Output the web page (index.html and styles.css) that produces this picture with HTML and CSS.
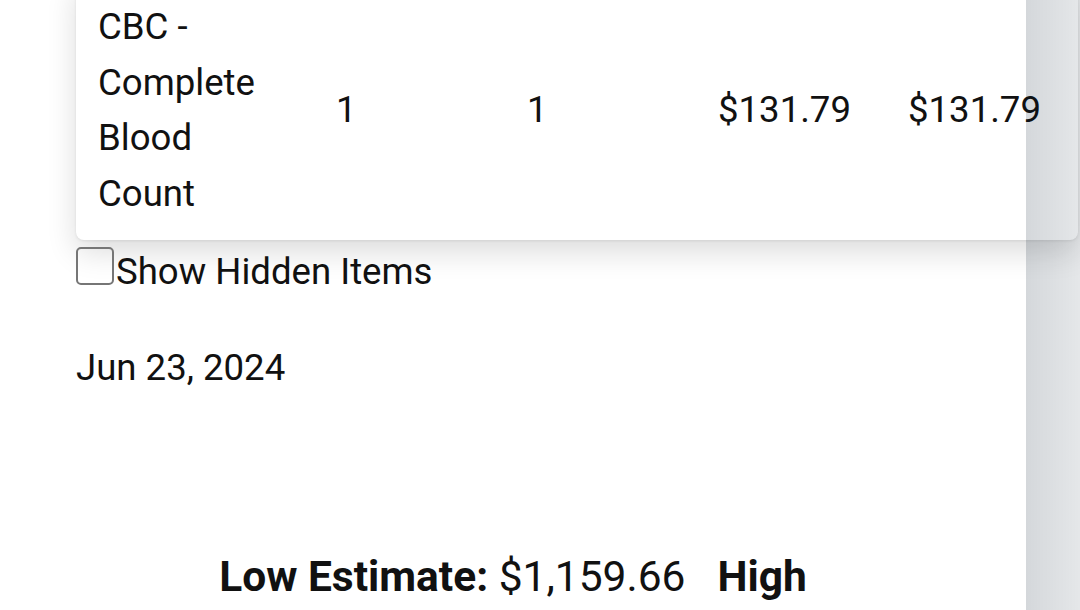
FILE: index.html
```html
<!DOCTYPE html>
<html lang="en">
<head>
    <meta charset="UTF-8">
    <meta name="viewport" content="width=device-width, initial-scale=1.0">
    <title>Estimate</title>
    <link rel="stylesheet" href="styles.css">
</head>
<body>

<div class="page">
    <div class="card">
        <div class="row">
            <div class="cell item">CBC - Complete Blood Count</div>
            <div class="cell">1</div>
            <div class="cell">1</div>
            <div class="cell">$131.79</div>
            <div class="cell">$131.79</div>
        </div>
    </div>

    <label class="toggle"><span class="box"></span>Show Hidden Items</label>

    <div class="date">Jun 23, 2024</div>

    <div class="estimate">
        <b>Low Estimate:</b> $1,159.66<b class="high">High</b>
    </div>
</div>

<div class="edge"></div>

</body>
</html>
```

FILE: styles.css
```css
body {
    margin: 0;
    background-color: #fff;
    color: #111;
    font-family: Roboto, "Noto Sans", sans-serif;
    font-size: 36.6px;
    line-height: 55.6px;
    overflow: hidden;
}
.page {
    padding: 0 2px 0 76px;
}
.card {
    margin-top: -22px;
    padding: 21px 22px 19px;
    background-color: #fff;
    border-radius: 8px;
    box-shadow: 0 12px 30px rgba(0, 0, 0, 0.14), 0 1px 3px rgba(0, 0, 0, 0.08);
}
.row {
    display: grid;
    grid-template-columns: 238px 191px 191px 190px 1fr;
    align-items: center;
}
.cell {
    white-space: nowrap;
}
.item {
    width: 180px;
    white-space: normal;
}
.toggle {
    display: block;
    margin-top: 4px;
}
.box {
    display: inline-block;
    width: 34px;
    height: 34px;
    margin-right: 2px;
    border: 2px solid #767676;
    border-radius: 5px;
    vertical-align: -1px;
}
.date {
    margin-top: 40px;
}
.estimate {
    width: 700px;
    margin: 149px 0 0 87px;
    text-align: center;
    font-size: 42.5px;
    line-height: 64px;
}
.high {
    margin-left: 32px;
}
.edge {
    position: fixed;
    top: 0;
    right: 0;
    width: 54px;
    height: 100%;
    background: linear-gradient(to right, rgba(0, 20, 40, 0.17), rgba(0, 20, 40, 0.1));
}
```
